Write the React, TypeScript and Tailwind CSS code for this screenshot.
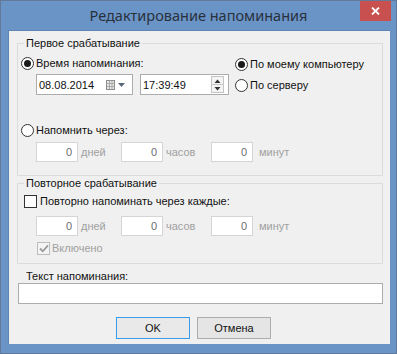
import React from 'react'

function Radio({ checked }: { checked?: boolean }) {
  return (
    <span className="w-[13px] h-[13px] shrink-0 rounded-full border border-[#333] bg-white flex items-center justify-center">
      {checked && <span className="w-[7px] h-[7px] rounded-full bg-[#1a1a1a]" />}
    </span>
  )
}

function Check({ disabled, checked }: { disabled?: boolean; checked?: boolean }) {
  return (
    <span
      className={`w-[13px] h-[13px] shrink-0 border flex items-center justify-center ${
        disabled ? 'border-[#bcbcbc] bg-[#f4f4f4]' : 'border-[#333] bg-white'
      }`}
    >
      {checked && (
        <svg width="10" height="9" viewBox="0 0 10 9">
          <path d="M1 4.5 L3.8 7.3 L9 1.3" fill="none" stroke={disabled ? '#9a9a9a' : '#222'} strokeWidth="1.8" />
        </svg>
      )}
    </span>
  )
}

function NumBox({ label, gap, w }: { label: string; gap: string; w: string }) {
  return (
    <>
      <div className="w-[42px] h-[20px] border border-[#d5d5d5] bg-white flex items-center justify-end pr-[5px] text-[#6d6d6d]">
        0
      </div>
      <span className={`${gap} ${w} text-[#a0a0a0]`}>{label}</span>
    </>
  )
}

function NumRow() {
  return (
    <div className="flex items-center ml-[18px] h-[20px]">
      <NumBox label="дней" gap="ml-[3px]" w="w-[40px]" />
      <NumBox label="часов" gap="ml-[3px]" w="w-[45px]" />
      <NumBox label="минут" gap="ml-[6px]" w="w-[50px]" />
    </div>
  )
}

export default function App() {
  return (
    <div className="w-[397px] h-[354px] bg-[#6b94c6] border border-[#63799a] flex flex-col font-['Liberation_Sans',Arial,sans-serif] text-[11px] leading-[14px] text-[#111]">
      <div className="relative h-[29px] shrink-0 flex items-center justify-center">
        <span className="font-['Noto_Sans',sans-serif] text-[14.5px] leading-[18px] text-[#27313d] -mt-[1px]">
          Редактирование напоминания
        </span>
        <div className="absolute top-0 right-[5px] w-[31px] h-[20px] bg-[#c8504e] flex items-center justify-center">
          <svg width="9" height="8" viewBox="0 0 9 8">
            <path d="M1 0.5 L8 7.5 M8 0.5 L1 7.5" stroke="#fff" strokeWidth="1.8" />
          </svg>
        </div>
      </div>

      <div className="ml-[7px] mr-[6px] h-[314px] bg-[#f0f0f0] border-t border-l border-[#5d84b4] flex flex-col">
        <fieldset className="mt-[5px] ml-[8px] mr-[7px] border border-[#dcdcdc] pb-[13px]">
          <legend className="ml-[6px] px-[2px]">Первое срабатывание</legend>
          <div className="flex pl-[3px] pt-[6px]">
            <div className="w-[214px]">
              <div className="flex items-center gap-[2px] h-[14px]">
                <Radio checked />
                <span>Время напоминания:</span>
              </div>
              <div className="flex mt-[4px] ml-[15px] gap-[7px]">
                <div className="w-[97px] h-[21px] border border-[#acacac] bg-white flex items-center pl-[2px]">
                  <span className="flex-1">08.08.2014</span>
                  <svg width="22" height="12" viewBox="0 0 22 12" className="mr-[5px]">
                    <rect x="1.5" y="1.5" width="8" height="9" fill="#e8e8e8" stroke="#8a8a8a" />
                    <path d="M1.5 4.5 H9.5 M1.5 7.5 H9.5 M4.5 1.5 V10.5 M7 1.5 V10.5" stroke="#a8a8a8" />
                    <path d="M13 4 H20 L16.5 8 Z" fill="#59677a" />
                  </svg>
                </div>
                <div className="w-[89px] h-[21px] border border-[#acacac] bg-white flex items-center pl-[2px]">
                  <span className="flex-1">17:39:49</span>
                  <div className="w-[13px] h-[17px] mr-[4px] border border-[#c4c4c4] bg-[#f4f4f4] flex flex-col">
                    <div className="flex-1 flex items-center justify-center border-b border-[#c4c4c4]">
                      <svg width="7" height="4" viewBox="0 0 7 4">
                        <path d="M0.5 4 L3.5 0.5 L6.5 4 Z" fill="#333" />
                      </svg>
                    </div>
                    <div className="flex-1 flex items-center justify-center">
                      <svg width="7" height="4" viewBox="0 0 7 4">
                        <path d="M0.5 0 L3.5 3.5 L6.5 0 Z" fill="#333" />
                      </svg>
                    </div>
                  </div>
                </div>
              </div>
            </div>
            <div className="flex flex-col gap-[7px] mt-[1px]">
              <div className="flex items-center gap-[2px] h-[14px]">
                <Radio checked />
                <span>По моему компьютеру</span>
              </div>
              <div className="flex items-center gap-[2px] h-[14px]">
                <Radio />
                <span>По серверу</span>
              </div>
            </div>
          </div>
          <div className="flex items-center gap-[2px] h-[14px] pl-[3px] mt-[28px]">
            <Radio />
            <span>Напомнить через:</span>
          </div>
          <div className="mt-[5px]">
            <NumRow />
          </div>
        </fieldset>

        <fieldset className="ml-[8px] mr-[7px] border border-[#dcdcdc] pb-[8px]">
          <legend className="ml-[6px] px-[2px]">Повторное срабатывание</legend>
          <div className="flex items-center gap-[3px] h-[14px] ml-[6px] mt-[4px]">
            <Check />
            <span>Повторно напоминать через каждые:</span>
          </div>
          <div className="mt-[8px]">
            <NumRow />
          </div>
          <div className="flex items-center gap-[2px] h-[14px] ml-[19px] mt-[5px]">
            <Check disabled checked />
            <span className="text-[#a0a0a0]">Включено</span>
          </div>
        </fieldset>

        <div className="ml-[17px] mt-[5px]">Текст напоминания:</div>
        <div className="ml-[9px] mr-[7px] h-[21px] border border-[#acacac] bg-white" />

        <div className="flex gap-[7px] ml-[107px] mt-[13px]">
          <div className="w-[74px] h-[22px] border border-[#3c9be8] bg-[#e9e9e9] flex items-center justify-center">
            OK
          </div>
          <div className="w-[74px] h-[22px] border border-[#acacac] bg-[#e5e5e5] flex items-center justify-center">
            Отмена
          </div>
        </div>
      </div>
    </div>
  )
}
